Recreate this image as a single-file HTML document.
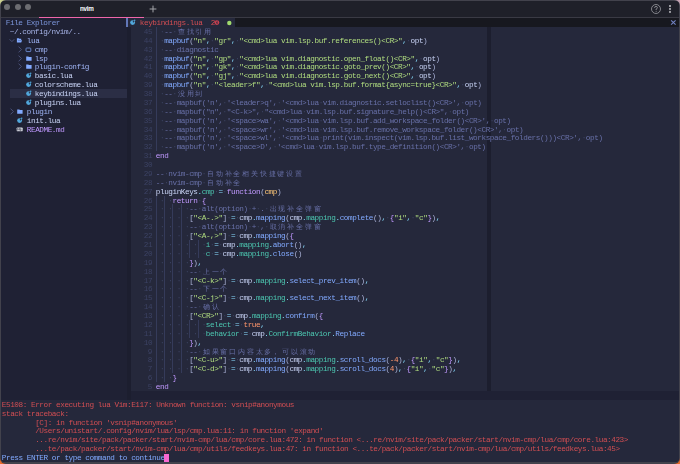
<!DOCTYPE html>
<html><head><meta charset="utf-8"><style>
html,body{margin:0;padding:0;width:680px;height:464px;overflow:hidden;background:#42424c}
body{position:relative;font-family:"Liberation Mono",monospace}
.corner{position:absolute;width:10px;height:10px}
#win{position:absolute;left:1.2px;top:1.2px;width:677.4px;height:461.2px;border-radius:4px;overflow:hidden;background:#1f2134}
.tl{position:absolute;top:3.9px;width:6.4px;height:6.4px;border-radius:50%;background:#6c6c71}
#grid{position:absolute;left:-1.2px;top:-1.2px;width:680px;height:464px}
.r{position:absolute;white-space:pre;will-change:transform;font-size:7.7px;line-height:8.88px;height:8.88px;letter-spacing:-0.4388px;transform:translate(-0.22px,1.3px)}
.w{display:inline-block;width:8.803px;text-align:center;font-style:normal;font-size:7.4px}
.wl{text-align:left}
.w{text-shadow:none}
.g{position:absolute;width:0.8px;height:8.88px;background:#353b5a}
.ic{position:absolute;overflow:visible}
</style></head><body>
<div class=corner style="left:0;top:0;background:radial-gradient(circle at 0 0,#d8dc9a 0,#a8ae78 35%,transparent 75%)"></div>
<div class=corner style="right:0;top:0;background:radial-gradient(circle at 100% 0,#d6b0c0 0,#9a8090 35%,transparent 75%)"></div>
<div class=corner style="left:0;bottom:0;background:radial-gradient(circle at 0 100%,#f07030 0,#d05a20 35%,transparent 75%)"></div>
<div class=corner style="right:0;bottom:0;background:radial-gradient(circle at 100% 100%,#f07030 0,#d05a20 35%,transparent 75%)"></div>
<div style="position:absolute;left:0;top:0;width:680px;height:464px;background:#42424c;border-radius:6px"></div>
<div id=win>
<div id=grid>
<div style="position:absolute;left:0;top:0;width:680px;height:17px;background:#1f2029"></div>
<div style="position:absolute;left:0;top:17px;width:680px;height:1px;background:#3a3a44"></div>
<div class=tl style="left:3.9px"></div><div class=tl style="left:14.5px"></div><div class=tl style="left:24.9px"></div>
<div style="position:absolute;left:79.5px;top:0;height:17px;white-space:pre;font-family:'Liberation Sans',sans-serif;font-size:7.6px;line-height:18px;color:#f0f0f4;text-shadow:0.3px 0 0 #f0f0f4;transform:scaleX(0.84);transform-origin:0 0">nvim</div>
<svg style="position:absolute;left:148.4px;top:3.8px" width="10" height="10" viewBox="0 0 10 10"><path d="M5 1.6 V8.4 M1.6 5 H8.4" stroke="#a4a4aa" stroke-width="1"/></svg>
<div style="position:absolute;left:39px;top:16.8px;width:105px;height:1.4px;background:#f066aa"></div>
<svg style="position:absolute;left:649.9px;top:2.8px" width="12" height="12" viewBox="0 0 12 12"><circle cx="6" cy="6" r="4.5" stroke="#9c9ca2" stroke-width="0.8" fill="none"/><path d="M4.6 4.9 Q4.6 3.4 6 3.4 Q7.4 3.4 7.4 4.7 Q7.4 5.6 6.1 6.1 V7" stroke="#9c9ca2" stroke-width="0.8" fill="none"/><circle cx="6.1" cy="8.3" r="0.5" fill="#9c9ca2"/></svg>
<div style="position:absolute;left:669.3px;top:5.2px;width:1.5px;height:1.4px;background:#9a9aa0;box-shadow:0 2.95px 0 #9a9aa0,0 5.9px 0 #9a9aa0"></div>
<div style="position:absolute;left:0;top:18.0px;width:680px;height:8.88px;background:#1f2134"></div>
<div style="position:absolute;left:131px;top:18.0px;width:548px;height:8.88px;background:#17181f"></div>
<div style="position:absolute;left:126.96px;top:18.0px;width:108.33px;height:8.88px;background:#25283b"></div>
<div style="position:absolute;left:131px;top:26.88px;width:548px;height:364.08px;background:#25283b"></div>
<div style="position:absolute;left:127px;top:26.88px;width:4px;height:372.96px;background:#1c1e2f"></div>
<div style="position:absolute;left:486.61px;top:26.88px;width:4.18px;height:364.08px;background:#1c1e2e"></div>
<div style="position:absolute;left:0;top:399.84px;width:680px;height:62.16px;background:#25283b"></div>
<div style="position:absolute;left:9.86px;top:89.04px;width:117.10px;height:8.88px;background:#2b2e45"></div>
<b class=g style="top:26.88px;left:155.73px"></b><b class=g style="top:35.76px;left:155.73px"></b><b class=g style="top:44.64px;left:155.73px"></b><b class=g style="top:53.52px;left:155.73px"></b><b class=g style="top:62.40px;left:155.73px"></b><b class=g style="top:71.28px;left:155.73px"></b><b class=g style="top:80.16px;left:155.73px"></b><b class=g style="top:89.04px;left:155.73px"></b><b class=g style="top:97.92px;left:155.73px"></b><b class=g style="top:106.80px;left:155.73px"></b><b class=g style="top:115.68px;left:155.73px"></b><b class=g style="top:124.56px;left:155.73px"></b><b class=g style="top:133.44px;left:155.73px"></b><b class=g style="top:142.32px;left:155.73px"></b><b class=g style="top:195.60px;left:155.73px"></b><b class=g style="top:195.60px;left:164.10px"></b><b class=g style="top:204.48px;left:155.73px"></b><b class=g style="top:204.48px;left:164.10px"></b><b class=g style="top:204.48px;left:172.46px"></b><b class=g style="top:204.48px;left:180.83px"></b><b class=g style="top:213.36px;left:155.73px"></b><b class=g style="top:213.36px;left:164.10px"></b><b class=g style="top:213.36px;left:172.46px"></b><b class=g style="top:213.36px;left:180.83px"></b><b class=g style="top:222.24px;left:155.73px"></b><b class=g style="top:222.24px;left:164.10px"></b><b class=g style="top:222.24px;left:172.46px"></b><b class=g style="top:222.24px;left:180.83px"></b><b class=g style="top:231.12px;left:155.73px"></b><b class=g style="top:231.12px;left:164.10px"></b><b class=g style="top:231.12px;left:172.46px"></b><b class=g style="top:231.12px;left:180.83px"></b><b class=g style="top:240.00px;left:155.73px"></b><b class=g style="top:240.00px;left:164.10px"></b><b class=g style="top:240.00px;left:172.46px"></b><b class=g style="top:240.00px;left:180.83px"></b><b class=g style="top:240.00px;left:189.19px"></b><b class=g style="top:240.00px;left:197.55px"></b><b class=g style="top:248.88px;left:155.73px"></b><b class=g style="top:248.88px;left:164.10px"></b><b class=g style="top:248.88px;left:172.46px"></b><b class=g style="top:248.88px;left:180.83px"></b><b class=g style="top:248.88px;left:189.19px"></b><b class=g style="top:248.88px;left:197.55px"></b><b class=g style="top:257.76px;left:155.73px"></b><b class=g style="top:257.76px;left:164.10px"></b><b class=g style="top:257.76px;left:172.46px"></b><b class=g style="top:257.76px;left:180.83px"></b><b class=g style="top:266.64px;left:155.73px"></b><b class=g style="top:266.64px;left:164.10px"></b><b class=g style="top:266.64px;left:172.46px"></b><b class=g style="top:266.64px;left:180.83px"></b><b class=g style="top:275.52px;left:155.73px"></b><b class=g style="top:275.52px;left:164.10px"></b><b class=g style="top:275.52px;left:172.46px"></b><b class=g style="top:275.52px;left:180.83px"></b><b class=g style="top:284.40px;left:155.73px"></b><b class=g style="top:284.40px;left:164.10px"></b><b class=g style="top:284.40px;left:172.46px"></b><b class=g style="top:284.40px;left:180.83px"></b><b class=g style="top:293.28px;left:155.73px"></b><b class=g style="top:293.28px;left:164.10px"></b><b class=g style="top:293.28px;left:172.46px"></b><b class=g style="top:293.28px;left:180.83px"></b><b class=g style="top:302.16px;left:155.73px"></b><b class=g style="top:302.16px;left:164.10px"></b><b class=g style="top:302.16px;left:172.46px"></b><b class=g style="top:302.16px;left:180.83px"></b><b class=g style="top:311.04px;left:155.73px"></b><b class=g style="top:311.04px;left:164.10px"></b><b class=g style="top:311.04px;left:172.46px"></b><b class=g style="top:311.04px;left:180.83px"></b><b class=g style="top:319.92px;left:155.73px"></b><b class=g style="top:319.92px;left:164.10px"></b><b class=g style="top:319.92px;left:172.46px"></b><b class=g style="top:319.92px;left:180.83px"></b><b class=g style="top:319.92px;left:189.19px"></b><b class=g style="top:319.92px;left:197.55px"></b><b class=g style="top:328.80px;left:155.73px"></b><b class=g style="top:328.80px;left:164.10px"></b><b class=g style="top:328.80px;left:172.46px"></b><b class=g style="top:328.80px;left:180.83px"></b><b class=g style="top:328.80px;left:189.19px"></b><b class=g style="top:328.80px;left:197.55px"></b><b class=g style="top:337.68px;left:155.73px"></b><b class=g style="top:337.68px;left:164.10px"></b><b class=g style="top:337.68px;left:172.46px"></b><b class=g style="top:337.68px;left:180.83px"></b><b class=g style="top:346.56px;left:155.73px"></b><b class=g style="top:346.56px;left:164.10px"></b><b class=g style="top:346.56px;left:172.46px"></b><b class=g style="top:346.56px;left:180.83px"></b><b class=g style="top:355.44px;left:155.73px"></b><b class=g style="top:355.44px;left:164.10px"></b><b class=g style="top:355.44px;left:172.46px"></b><b class=g style="top:355.44px;left:180.83px"></b><b class=g style="top:364.32px;left:155.73px"></b><b class=g style="top:364.32px;left:164.10px"></b><b class=g style="top:364.32px;left:172.46px"></b><b class=g style="top:364.32px;left:180.83px"></b><b class=g style="top:373.20px;left:155.73px"></b><b class=g style="top:373.20px;left:164.10px"></b>
<div class=r style="top:26.88px;left:143.69px"><span style="color:#3c4264">45</span></div>
<div class=r style="top:26.88px;left:156.23px"><span style="color:#3b4261"> ·</span><span style="color:#6870a8">--</span><span style="color:#3b4261">·</span><span style="color:#6870a8"><i class="w">查</i><i class="w">找</i><i class="w">引</i><i class="w">用</i></span></div>
<div class=r style="top:35.76px;left:143.69px"><span style="color:#3c4264">44</span></div>
<div class=r style="top:35.76px;left:156.23px"><span style="color:#3b4261"> ·</span><span style="color:#82aaff">mapbuf</span><span style="color:#a9b1d6">(</span><span style="color:#b2df80">"n"</span><span style="color:#89ddff">,</span><span style="color:#3b4261">·</span><span style="color:#b2df80">"gr"</span><span style="color:#89ddff">,</span><span style="color:#3b4261">·</span><span style="color:#b2df80">"&lt;cmd&gt;lua vim.lsp.buf.references()&lt;CR&gt;"</span><span style="color:#89ddff">,</span><span style="color:#3b4261">·</span><span style="color:#c8d3f5">opt</span><span style="color:#a9b1d6">)</span></div>
<div class=r style="top:44.64px;left:143.69px"><span style="color:#3c4264">43</span></div>
<div class=r style="top:44.64px;left:156.23px"><span style="color:#3b4261"> ·</span><span style="color:#6870a8">--</span><span style="color:#3b4261">·</span><span style="color:#6870a8">diagnostic</span></div>
<div class=r style="top:53.52px;left:143.69px"><span style="color:#3c4264">42</span></div>
<div class=r style="top:53.52px;left:156.23px"><span style="color:#3b4261"> ·</span><span style="color:#82aaff">mapbuf</span><span style="color:#a9b1d6">(</span><span style="color:#b2df80">"n"</span><span style="color:#89ddff">,</span><span style="color:#3b4261">·</span><span style="color:#b2df80">"gp"</span><span style="color:#89ddff">,</span><span style="color:#3b4261">·</span><span style="color:#b2df80">"&lt;cmd&gt;lua vim.diagnostic.open_float()&lt;CR&gt;"</span><span style="color:#89ddff">,</span><span style="color:#3b4261">·</span><span style="color:#c8d3f5">opt</span><span style="color:#a9b1d6">)</span></div>
<div class=r style="top:62.40px;left:143.69px"><span style="color:#3c4264">41</span></div>
<div class=r style="top:62.40px;left:156.23px"><span style="color:#3b4261"> ·</span><span style="color:#82aaff">mapbuf</span><span style="color:#a9b1d6">(</span><span style="color:#b2df80">"n"</span><span style="color:#89ddff">,</span><span style="color:#3b4261">·</span><span style="color:#b2df80">"gk"</span><span style="color:#89ddff">,</span><span style="color:#3b4261">·</span><span style="color:#b2df80">"&lt;cmd&gt;lua vim.diagnostic.goto_prev()&lt;CR&gt;"</span><span style="color:#89ddff">,</span><span style="color:#3b4261">·</span><span style="color:#c8d3f5">opt</span><span style="color:#a9b1d6">)</span></div>
<div class=r style="top:71.28px;left:143.69px"><span style="color:#3c4264">40</span></div>
<div class=r style="top:71.28px;left:156.23px"><span style="color:#3b4261"> ·</span><span style="color:#82aaff">mapbuf</span><span style="color:#a9b1d6">(</span><span style="color:#b2df80">"n"</span><span style="color:#89ddff">,</span><span style="color:#3b4261">·</span><span style="color:#b2df80">"gj"</span><span style="color:#89ddff">,</span><span style="color:#3b4261">·</span><span style="color:#b2df80">"&lt;cmd&gt;lua vim.diagnostic.goto_next()&lt;CR&gt;"</span><span style="color:#89ddff">,</span><span style="color:#3b4261">·</span><span style="color:#c8d3f5">opt</span><span style="color:#a9b1d6">)</span></div>
<div class=r style="top:80.16px;left:143.69px"><span style="color:#3c4264">39</span></div>
<div class=r style="top:80.16px;left:156.23px"><span style="color:#3b4261"> ·</span><span style="color:#82aaff">mapbuf</span><span style="color:#a9b1d6">(</span><span style="color:#b2df80">"n"</span><span style="color:#89ddff">,</span><span style="color:#3b4261">·</span><span style="color:#b2df80">"&lt;leader&gt;f"</span><span style="color:#89ddff">,</span><span style="color:#3b4261">·</span><span style="color:#b2df80">"&lt;cmd&gt;lua vim.lsp.buf.format{async=true}&lt;CR&gt;"</span><span style="color:#89ddff">,</span><span style="color:#3b4261">·</span><span style="color:#c8d3f5">opt</span><span style="color:#a9b1d6">)</span></div>
<div class=r style="top:89.04px;left:143.69px"><span style="color:#3c4264">38</span></div>
<div class=r style="top:89.04px;left:156.23px"><span style="color:#3b4261"> ·</span><span style="color:#6870a8">--</span><span style="color:#3b4261">·</span><span style="color:#6870a8"><i class="w">没</i><i class="w">用</i><i class="w">到</i></span></div>
<div class=r style="top:97.92px;left:143.69px"><span style="color:#3c4264">37</span></div>
<div class=r style="top:97.92px;left:156.23px"><span style="color:#3b4261"> ·</span><span style="color:#6870a8">--</span><span style="color:#3b4261">·</span><span style="color:#6870a8">mapbuf('n',</span><span style="color:#3b4261">·</span><span style="color:#6870a8">'&lt;leader&gt;q',</span><span style="color:#3b4261">·</span><span style="color:#6870a8">'&lt;cmd&gt;lua</span><span style="color:#3b4261">·</span><span style="color:#6870a8">vim.diagnostic.setloclist()&lt;CR&gt;',</span><span style="color:#3b4261">·</span><span style="color:#6870a8">opt)</span></div>
<div class=r style="top:106.80px;left:143.69px"><span style="color:#3c4264">36</span></div>
<div class=r style="top:106.80px;left:156.23px"><span style="color:#3b4261"> ·</span><span style="color:#6870a8">--</span><span style="color:#3b4261">·</span><span style="color:#6870a8">mapbuf("n",</span><span style="color:#3b4261">·</span><span style="color:#6870a8">"&lt;C-k&gt;",</span><span style="color:#3b4261">·</span><span style="color:#6870a8">"&lt;cmd&gt;lua</span><span style="color:#3b4261">·</span><span style="color:#6870a8">vim.lsp.buf.signature_help()&lt;CR&gt;",</span><span style="color:#3b4261">·</span><span style="color:#6870a8">opt)</span></div>
<div class=r style="top:115.68px;left:143.69px"><span style="color:#3c4264">35</span></div>
<div class=r style="top:115.68px;left:156.23px"><span style="color:#3b4261"> ·</span><span style="color:#6870a8">--</span><span style="color:#3b4261">·</span><span style="color:#6870a8">mapbuf('n',</span><span style="color:#3b4261">·</span><span style="color:#6870a8">'&lt;space&gt;wa',</span><span style="color:#3b4261">·</span><span style="color:#6870a8">'&lt;cmd&gt;lua</span><span style="color:#3b4261">·</span><span style="color:#6870a8">vim.lsp.buf.add_workspace_folder()&lt;CR&gt;',</span><span style="color:#3b4261">·</span><span style="color:#6870a8">opt)</span></div>
<div class=r style="top:124.56px;left:143.69px"><span style="color:#3c4264">34</span></div>
<div class=r style="top:124.56px;left:156.23px"><span style="color:#3b4261"> ·</span><span style="color:#6870a8">--</span><span style="color:#3b4261">·</span><span style="color:#6870a8">mapbuf('n',</span><span style="color:#3b4261">·</span><span style="color:#6870a8">'&lt;space&gt;wr',</span><span style="color:#3b4261">·</span><span style="color:#6870a8">'&lt;cmd&gt;lua</span><span style="color:#3b4261">·</span><span style="color:#6870a8">vim.lsp.buf.remove_workspace_folder()&lt;CR&gt;',</span><span style="color:#3b4261">·</span><span style="color:#6870a8">opt)</span></div>
<div class=r style="top:133.44px;left:143.69px"><span style="color:#3c4264">33</span></div>
<div class=r style="top:133.44px;left:156.23px"><span style="color:#3b4261"> ·</span><span style="color:#6870a8">--</span><span style="color:#3b4261">·</span><span style="color:#6870a8">mapbuf('n',</span><span style="color:#3b4261">·</span><span style="color:#6870a8">'&lt;space&gt;wl',</span><span style="color:#3b4261">·</span><span style="color:#6870a8">'&lt;cmd&gt;lua</span><span style="color:#3b4261">·</span><span style="color:#6870a8">print(vim.inspect(vim.lsp.buf.list_workspace_folders()))&lt;CR&gt;',</span><span style="color:#3b4261">·</span><span style="color:#6870a8">opt)</span></div>
<div class=r style="top:142.32px;left:143.69px"><span style="color:#3c4264">32</span></div>
<div class=r style="top:142.32px;left:156.23px"><span style="color:#3b4261"> ·</span><span style="color:#6870a8">--</span><span style="color:#3b4261">·</span><span style="color:#6870a8">mapbuf('n',</span><span style="color:#3b4261">·</span><span style="color:#6870a8">'&lt;space&gt;D',</span><span style="color:#3b4261">·</span><span style="color:#6870a8">'&lt;cmd&gt;lua</span><span style="color:#3b4261">·</span><span style="color:#6870a8">vim.lsp.buf.type_definition()&lt;CR&gt;',</span><span style="color:#3b4261">·</span><span style="color:#6870a8">opt)</span></div>
<div class=r style="top:151.20px;left:143.69px"><span style="color:#3c4264">31</span></div>
<div class=r style="top:151.20px;left:156.23px"><span style="color:#c099ff">end</span></div>
<div class=r style="top:160.08px;left:143.69px"><span style="color:#3c4264">30</span></div>
<div class=r style="top:168.96px;left:143.69px"><span style="color:#3c4264">29</span></div>
<div class=r style="top:168.96px;left:156.23px"><span style="color:#6870a8">--</span><span style="color:#3b4261">·</span><span style="color:#6870a8">nvim-cmp</span><span style="color:#3b4261">·</span><span style="color:#6870a8"><i class="w">自</i><i class="w">动</i><i class="w">补</i><i class="w">全</i><i class="w">相</i><i class="w">关</i><i class="w">快</i><i class="w">捷</i><i class="w">键</i><i class="w">设</i><i class="w">置</i></span></div>
<div class=r style="top:177.84px;left:143.69px"><span style="color:#3c4264">28</span></div>
<div class=r style="top:177.84px;left:156.23px"><span style="color:#6870a8">--</span><span style="color:#3b4261">·</span><span style="color:#6870a8">nvim-cmp</span><span style="color:#3b4261">·</span><span style="color:#6870a8"><i class="w">自</i><i class="w">动</i><i class="w">补</i><i class="w">全</i></span></div>
<div class=r style="top:186.72px;left:143.69px"><span style="color:#3c4264">27</span></div>
<div class=r style="top:186.72px;left:156.23px"><span style="color:#c8d3f5">pluginKeys</span><span style="color:#89ddff">.</span><span style="color:#4cc6b0">cmp</span><span style="color:#3b4261">·</span><span style="color:#89ddff">=</span><span style="color:#3b4261">·</span><span style="color:#c099ff">function</span><span style="color:#a9b1d6">(</span><span style="color:#ffc777">cmp</span><span style="color:#a9b1d6">)</span></div>
<div class=r style="top:195.60px;left:143.69px"><span style="color:#3c4264">26</span></div>
<div class=r style="top:195.60px;left:156.23px"><span style="color:#3b4261"> · ·</span><span style="color:#c099ff">return</span><span style="color:#3b4261">·</span><span style="color:#c099ff">{</span></div>
<div class=r style="top:204.48px;left:143.69px"><span style="color:#3c4264">25</span></div>
<div class=r style="top:204.48px;left:156.23px"><span style="color:#3b4261"> · · · ·</span><span style="color:#6870a8">--</span><span style="color:#3b4261">·</span><span style="color:#6870a8">alt(option)</span><span style="color:#3b4261">·</span><span style="color:#6870a8">+</span><span style="color:#3b4261">·</span><span style="color:#6870a8">.</span><span style="color:#3b4261">·</span><span style="color:#6870a8"><i class="w">出</i><i class="w">现</i><i class="w">补</i><i class="w">全</i><i class="w">弹</i><i class="w">窗</i></span></div>
<div class=r style="top:213.36px;left:143.69px"><span style="color:#3c4264">24</span></div>
<div class=r style="top:213.36px;left:156.23px"><span style="color:#3b4261"> · · · ·</span><span style="color:#a9b1d6">[</span><span style="color:#b2df80">"&lt;A-.&gt;"</span><span style="color:#a9b1d6">]</span><span style="color:#3b4261">·</span><span style="color:#89ddff">=</span><span style="color:#3b4261">·</span><span style="color:#c8d3f5">cmp</span><span style="color:#89ddff">.</span><span style="color:#82aaff">mapping</span><span style="color:#a9b1d6">(</span><span style="color:#c8d3f5">cmp</span><span style="color:#89ddff">.</span><span style="color:#4cc6b0">mapping</span><span style="color:#89ddff">.</span><span style="color:#82aaff">complete</span><span style="color:#a9b1d6">()</span><span style="color:#89ddff">,</span><span style="color:#3b4261">·</span><span style="color:#c099ff">{</span><span style="color:#b2df80">"i"</span><span style="color:#89ddff">,</span><span style="color:#3b4261">·</span><span style="color:#b2df80">"c"</span><span style="color:#c099ff">}</span><span style="color:#a9b1d6">)</span><span style="color:#89ddff">,</span></div>
<div class=r style="top:222.24px;left:143.69px"><span style="color:#3c4264">23</span></div>
<div class=r style="top:222.24px;left:156.23px"><span style="color:#3b4261"> · · · ·</span><span style="color:#6870a8">--</span><span style="color:#3b4261">·</span><span style="color:#6870a8">alt(option)</span><span style="color:#3b4261">·</span><span style="color:#6870a8">+</span><span style="color:#3b4261">·</span><span style="color:#6870a8">,</span><span style="color:#3b4261">·</span><span style="color:#6870a8"><i class="w">取</i><i class="w">消</i><i class="w">补</i><i class="w">全</i><i class="w">弹</i><i class="w">窗</i></span></div>
<div class=r style="top:231.12px;left:143.69px"><span style="color:#3c4264">22</span></div>
<div class=r style="top:231.12px;left:156.23px"><span style="color:#3b4261"> · · · ·</span><span style="color:#a9b1d6">[</span><span style="color:#b2df80">"&lt;A-,&gt;"</span><span style="color:#a9b1d6">]</span><span style="color:#3b4261">·</span><span style="color:#89ddff">=</span><span style="color:#3b4261">·</span><span style="color:#c8d3f5">cmp</span><span style="color:#89ddff">.</span><span style="color:#82aaff">mapping</span><span style="color:#a9b1d6">(</span><span style="color:#c099ff">{</span></div>
<div class=r style="top:240.00px;left:143.69px"><span style="color:#3c4264">21</span></div>
<div class=r style="top:240.00px;left:156.23px"><span style="color:#3b4261"> · · · · · ·</span><span style="color:#4cc6b0">i</span><span style="color:#3b4261">·</span><span style="color:#89ddff">=</span><span style="color:#3b4261">·</span><span style="color:#c8d3f5">cmp</span><span style="color:#89ddff">.</span><span style="color:#4cc6b0">mapping</span><span style="color:#89ddff">.</span><span style="color:#82aaff">abort</span><span style="color:#a9b1d6">()</span><span style="color:#89ddff">,</span></div>
<div class=r style="top:248.88px;left:143.69px"><span style="color:#3c4264">20</span></div>
<div class=r style="top:248.88px;left:156.23px"><span style="color:#3b4261"> · · · · · ·</span><span style="color:#4cc6b0">c</span><span style="color:#3b4261">·</span><span style="color:#89ddff">=</span><span style="color:#3b4261">·</span><span style="color:#c8d3f5">cmp</span><span style="color:#89ddff">.</span><span style="color:#4cc6b0">mapping</span><span style="color:#89ddff">.</span><span style="color:#82aaff">close</span><span style="color:#a9b1d6">()</span></div>
<div class=r style="top:257.76px;left:143.69px"><span style="color:#3c4264">19</span></div>
<div class=r style="top:257.76px;left:156.23px"><span style="color:#3b4261"> · · · ·</span><span style="color:#c099ff">}</span><span style="color:#a9b1d6">)</span><span style="color:#89ddff">,</span></div>
<div class=r style="top:266.64px;left:143.69px"><span style="color:#3c4264">18</span></div>
<div class=r style="top:266.64px;left:156.23px"><span style="color:#3b4261"> · · · ·</span><span style="color:#6870a8">--</span><span style="color:#3b4261">·</span><span style="color:#6870a8"><i class="w">上</i><i class="w">一</i><i class="w">个</i></span></div>
<div class=r style="top:275.52px;left:143.69px"><span style="color:#3c4264">17</span></div>
<div class=r style="top:275.52px;left:156.23px"><span style="color:#3b4261"> · · · ·</span><span style="color:#a9b1d6">[</span><span style="color:#b2df80">"&lt;C-k&gt;"</span><span style="color:#a9b1d6">]</span><span style="color:#3b4261">·</span><span style="color:#89ddff">=</span><span style="color:#3b4261">·</span><span style="color:#c8d3f5">cmp</span><span style="color:#89ddff">.</span><span style="color:#4cc6b0">mapping</span><span style="color:#89ddff">.</span><span style="color:#82aaff">select_prev_item</span><span style="color:#a9b1d6">()</span><span style="color:#89ddff">,</span></div>
<div class=r style="top:284.40px;left:143.69px"><span style="color:#3c4264">16</span></div>
<div class=r style="top:284.40px;left:156.23px"><span style="color:#3b4261"> · · · ·</span><span style="color:#6870a8">--</span><span style="color:#3b4261">·</span><span style="color:#6870a8"><i class="w">下</i><i class="w">一</i><i class="w">个</i></span></div>
<div class=r style="top:293.28px;left:143.69px"><span style="color:#3c4264">15</span></div>
<div class=r style="top:293.28px;left:156.23px"><span style="color:#3b4261"> · · · ·</span><span style="color:#a9b1d6">[</span><span style="color:#b2df80">"&lt;C-j&gt;"</span><span style="color:#a9b1d6">]</span><span style="color:#3b4261">·</span><span style="color:#89ddff">=</span><span style="color:#3b4261">·</span><span style="color:#c8d3f5">cmp</span><span style="color:#89ddff">.</span><span style="color:#4cc6b0">mapping</span><span style="color:#89ddff">.</span><span style="color:#82aaff">select_next_item</span><span style="color:#a9b1d6">()</span><span style="color:#89ddff">,</span></div>
<div class=r style="top:302.16px;left:143.69px"><span style="color:#3c4264">14</span></div>
<div class=r style="top:302.16px;left:156.23px"><span style="color:#3b4261"> · · · ·</span><span style="color:#6870a8">--</span><span style="color:#3b4261">·</span><span style="color:#6870a8"><i class="w">确</i><i class="w">认</i></span></div>
<div class=r style="top:311.04px;left:143.69px"><span style="color:#3c4264">13</span></div>
<div class=r style="top:311.04px;left:156.23px"><span style="color:#3b4261"> · · · ·</span><span style="color:#a9b1d6">[</span><span style="color:#b2df80">"&lt;CR&gt;"</span><span style="color:#a9b1d6">]</span><span style="color:#3b4261">·</span><span style="color:#89ddff">=</span><span style="color:#3b4261">·</span><span style="color:#c8d3f5">cmp</span><span style="color:#89ddff">.</span><span style="color:#4cc6b0">mapping</span><span style="color:#89ddff">.</span><span style="color:#82aaff">confirm</span><span style="color:#a9b1d6">(</span><span style="color:#c099ff">{</span></div>
<div class=r style="top:319.92px;left:143.69px"><span style="color:#3c4264">12</span></div>
<div class=r style="top:319.92px;left:156.23px"><span style="color:#3b4261"> · · · · · ·</span><span style="color:#4cc6b0">select</span><span style="color:#3b4261">·</span><span style="color:#89ddff">=</span><span style="color:#3b4261">·</span><span style="color:#ff966c">true</span><span style="color:#89ddff">,</span></div>
<div class=r style="top:328.80px;left:143.69px"><span style="color:#3c4264">11</span></div>
<div class=r style="top:328.80px;left:156.23px"><span style="color:#3b4261"> · · · · · ·</span><span style="color:#4cc6b0">behavior</span><span style="color:#3b4261">·</span><span style="color:#89ddff">=</span><span style="color:#3b4261">·</span><span style="color:#c8d3f5">cmp</span><span style="color:#89ddff">.</span><span style="color:#4cc6b0">ConfirmBehavior</span><span style="color:#89ddff">.</span><span style="color:#82aaff">Replace</span></div>
<div class=r style="top:337.68px;left:143.69px"><span style="color:#3c4264">10</span></div>
<div class=r style="top:337.68px;left:156.23px"><span style="color:#3b4261"> · · · ·</span><span style="color:#c099ff">}</span><span style="color:#a9b1d6">)</span><span style="color:#89ddff">,</span></div>
<div class=r style="top:346.56px;left:147.87px"><span style="color:#3c4264">9</span></div>
<div class=r style="top:346.56px;left:156.23px"><span style="color:#3b4261"> · · · ·</span><span style="color:#6870a8">--</span><span style="color:#3b4261">·</span><span style="color:#6870a8"><i class="w">如</i><i class="w">果</i><i class="w">窗</i><i class="w">口</i><i class="w">内</i><i class="w">容</i><i class="w">太</i><i class="w">多</i><i class="w wl">，</i><i class="w">可</i><i class="w">以</i><i class="w">滚</i><i class="w">动</i></span></div>
<div class=r style="top:355.44px;left:147.87px"><span style="color:#3c4264">8</span></div>
<div class=r style="top:355.44px;left:156.23px"><span style="color:#3b4261"> · · · ·</span><span style="color:#a9b1d6">[</span><span style="color:#b2df80">"&lt;C-u&gt;"</span><span style="color:#a9b1d6">]</span><span style="color:#3b4261">·</span><span style="color:#89ddff">=</span><span style="color:#3b4261">·</span><span style="color:#c8d3f5">cmp</span><span style="color:#89ddff">.</span><span style="color:#82aaff">mapping</span><span style="color:#a9b1d6">(</span><span style="color:#c8d3f5">cmp</span><span style="color:#89ddff">.</span><span style="color:#4cc6b0">mapping</span><span style="color:#89ddff">.</span><span style="color:#82aaff">scroll_docs</span><span style="color:#a9b1d6">(</span><span style="color:#ff966c">-4</span><span style="color:#a9b1d6">)</span><span style="color:#89ddff">,</span><span style="color:#3b4261">·</span><span style="color:#c099ff">{</span><span style="color:#b2df80">"i"</span><span style="color:#89ddff">,</span><span style="color:#3b4261">·</span><span style="color:#b2df80">"c"</span><span style="color:#c099ff">}</span><span style="color:#a9b1d6">)</span><span style="color:#89ddff">,</span></div>
<div class=r style="top:364.32px;left:147.87px"><span style="color:#3c4264">7</span></div>
<div class=r style="top:364.32px;left:156.23px"><span style="color:#3b4261"> · · · ·</span><span style="color:#a9b1d6">[</span><span style="color:#b2df80">"&lt;C-d&gt;"</span><span style="color:#a9b1d6">]</span><span style="color:#3b4261">·</span><span style="color:#89ddff">=</span><span style="color:#3b4261">·</span><span style="color:#c8d3f5">cmp</span><span style="color:#89ddff">.</span><span style="color:#82aaff">mapping</span><span style="color:#a9b1d6">(</span><span style="color:#c8d3f5">cmp</span><span style="color:#89ddff">.</span><span style="color:#4cc6b0">mapping</span><span style="color:#89ddff">.</span><span style="color:#82aaff">scroll_docs</span><span style="color:#a9b1d6">(</span><span style="color:#ff966c">4</span><span style="color:#a9b1d6">)</span><span style="color:#89ddff">,</span><span style="color:#3b4261">·</span><span style="color:#c099ff">{</span><span style="color:#b2df80">"i"</span><span style="color:#89ddff">,</span><span style="color:#3b4261">·</span><span style="color:#b2df80">"c"</span><span style="color:#c099ff">}</span><span style="color:#a9b1d6">)</span><span style="color:#89ddff">,</span></div>
<div class=r style="top:373.20px;left:147.87px"><span style="color:#3c4264">6</span></div>
<div class=r style="top:373.20px;left:156.23px"><span style="color:#3b4261"> · ·</span><span style="color:#c099ff">}</span></div>
<div class=r style="top:382.08px;left:147.87px"><span style="color:#3c4264">5</span></div>
<div class=r style="top:382.08px;left:156.23px"><span style="color:#c099ff">end</span></div>

<div class=r style="top:18.00px;left:5.68px"><span style="color:#7c96dc">File Explorer</span></div>
<div class=r style="top:26.88px;left:9.86px"><span style="color:#a6b3e6">~/.config/nvim/..</span></div>
<div class=r style="top:35.76px;left:26.59px"><span style="color:#9db2f2">lua</span></div>
<div class=r style="top:44.64px;left:34.96px"><span style="color:#9db2f2">cmp</span></div>
<div class=r style="top:53.52px;left:34.96px"><span style="color:#9db2f2">lsp</span></div>
<div class=r style="top:62.40px;left:34.96px"><span style="color:#9db2f2">plugin-config</span></div>
<div class=r style="top:71.28px;left:34.96px"><span style="color:#c8d3f5">basic.lua</span></div>
<div class=r style="top:80.16px;left:34.96px"><span style="color:#c8d3f5">colorscheme.lua</span></div>
<div class=r style="top:89.04px;left:34.96px"><span style="color:#c8d3f5">keybindings.lua</span></div>
<div class=r style="top:97.92px;left:34.96px"><span style="color:#c8d3f5">plugins.lua</span></div>
<div class=r style="top:106.80px;left:26.59px"><span style="color:#9db2f2">plugin</span></div>
<div class=r style="top:115.68px;left:26.59px"><span style="color:#c8d3f5">init.lua</span></div>
<div class=r style="top:124.56px;left:26.59px"><span style="color:#c099ff">README.md</span></div>
<svg class=ic style="left:7.86px;top:35.76px" width="12" height="9" viewBox="-2.0 0 12 9"><path d="M-0.4 3.3 L1.9 5.6 L4.2 3.3" stroke="#4a5178" stroke-width="1.0" fill="none"/></svg><svg class=ic style="left:16.23px;top:35.76px" width="12" height="9" viewBox="-2.0 0 12 9"><path d="M-1.1 2.2 h1.9 l0.6 0.6 h1.8 v1.1 h-3.2 l-1.1 2.6 z M-0.2 4.3 h4.3 l-0.9 2.3 h-4.3 z" fill="#82aaff"/></svg><svg class=ic style="left:16.23px;top:44.64px" width="12" height="9" viewBox="-2.0 0 12 9"><path d="M0.5 1.6 L3.4 4.5 L0.5 7.4" stroke="#4a5178" stroke-width="1.0" fill="none"/></svg><svg class=ic style="left:24.59px;top:44.64px" width="12" height="9" viewBox="-2.0 0 12 9"><rect x="-1.0" y="3.0" width="4.8" height="3.6" rx="0.7" stroke="#82aaff" stroke-width="0.7" fill="none"/></svg><svg class=ic style="left:16.23px;top:53.52px" width="12" height="9" viewBox="-2.0 0 12 9"><path d="M0.5 1.6 L3.4 4.5 L0.5 7.4" stroke="#4a5178" stroke-width="1.0" fill="none"/></svg><svg class=ic style="left:24.59px;top:53.52px" width="12" height="9" viewBox="-2.0 0 12 9"><path d="M-0.8 2.5 h2.1 l0.6 0.6 h2.7 v3.6 h-5.4 z" fill="#82aaff"/></svg><svg class=ic style="left:16.23px;top:62.40px" width="12" height="9" viewBox="-2.0 0 12 9"><path d="M0.5 1.6 L3.4 4.5 L0.5 7.4" stroke="#4a5178" stroke-width="1.0" fill="none"/></svg><svg class=ic style="left:24.59px;top:62.40px" width="12" height="9" viewBox="-2.0 0 12 9"><path d="M-0.8 2.5 h2.1 l0.6 0.6 h2.7 v3.6 h-5.4 z" fill="#82aaff"/></svg><svg class=ic style="left:24.59px;top:71.28px" width="12" height="9" viewBox="-2.0 0 12 9"><circle cx="1.6" cy="4.6" r="2.45" fill="#51a8dd"/><circle cx="2.45" cy="3.7" r="0.7" fill="#1f2134"/><circle cx="3.7" cy="2.3" r="0.75" fill="#51a8dd"/></svg><svg class=ic style="left:24.59px;top:80.16px" width="12" height="9" viewBox="-2.0 0 12 9"><circle cx="1.6" cy="4.6" r="2.45" fill="#51a8dd"/><circle cx="2.45" cy="3.7" r="0.7" fill="#1f2134"/><circle cx="3.7" cy="2.3" r="0.75" fill="#51a8dd"/></svg><svg class=ic style="left:24.59px;top:89.04px" width="12" height="9" viewBox="-2.0 0 12 9"><circle cx="1.6" cy="4.6" r="2.45" fill="#51a8dd"/><circle cx="2.45" cy="3.7" r="0.7" fill="#2b2e45"/><circle cx="3.7" cy="2.3" r="0.75" fill="#51a8dd"/></svg><svg class=ic style="left:24.59px;top:97.92px" width="12" height="9" viewBox="-2.0 0 12 9"><circle cx="1.6" cy="4.6" r="2.45" fill="#51a8dd"/><circle cx="2.45" cy="3.7" r="0.7" fill="#1f2134"/><circle cx="3.7" cy="2.3" r="0.75" fill="#51a8dd"/></svg><svg class=ic style="left:7.86px;top:106.80px" width="12" height="9" viewBox="-2.0 0 12 9"><path d="M0.5 1.6 L3.4 4.5 L0.5 7.4" stroke="#4a5178" stroke-width="1.0" fill="none"/></svg><svg class=ic style="left:16.23px;top:106.80px" width="12" height="9" viewBox="-2.0 0 12 9"><path d="M-0.8 2.5 h2.1 l0.6 0.6 h2.7 v3.6 h-5.4 z" fill="#82aaff"/></svg><svg class=ic style="left:16.23px;top:115.68px" width="12" height="9" viewBox="-2.0 0 12 9"><circle cx="1.6" cy="4.6" r="2.45" fill="#51a8dd"/><circle cx="2.45" cy="3.7" r="0.7" fill="#1f2134"/><circle cx="3.7" cy="2.3" r="0.75" fill="#51a8dd"/></svg><svg class=ic style="left:16.23px;top:124.56px" width="12" height="9" viewBox="-2.0 0 12 9"><rect x="-1.3" y="2.4" width="6" height="3.9" rx="0.9" fill="#d0d3dc"/><path d="M-0.4 5.4 v-2.0 l0.9 1.0 l0.9 -1.0 v2.0 M2.6 3.3 v2.0 M1.9 4.6 l0.7 0.8 l0.7 -0.8" stroke="#1e2030" stroke-width="0.5" fill="none"/></svg>
<div class=r style="top:18.00px;left:139.51px"><span style="color:#d24e53">keybindings.lua</span></div>
<div class=r style="top:18.00px;left:210.60px"><span style="color:#d24e53">2</span></div>
<b style="position:absolute;left:125.9px;top:18.1px;width:1.9px;height:8.8px;background:#6277b8"></b><svg class=ic style="left:129.14px;top:18.00px" width="12" height="9" viewBox="-2.0 0 12 9"><circle cx="1.6" cy="4.6" r="2.45" fill="#51a8dd"/><circle cx="2.45" cy="3.7" r="0.7" fill="#25283b"/><circle cx="3.7" cy="2.3" r="0.75" fill="#51a8dd"/></svg><svg class=ic style="left:212.78px;top:18.00px" width="12" height="9" viewBox="-2.0 0 12 9"><circle cx="1.9" cy="4.6" r="2.4" fill="#cc4050"/><path d="M0.8 3.5 L3.0 5.7 M3.0 3.5 L0.8 5.7" stroke="#25283b" stroke-width="0.7"/></svg><svg class=ic style="left:225.33px;top:18.00px" width="12" height="9" viewBox="-2.0 0 12 9"><circle cx="2.3" cy="5.06" r="2.2" fill="#a0da6e"/></svg><svg class=ic style="left:669.5px;top:18.00px" width="8" height="9" viewBox="0 0 8 9"><path d="M1.1 2.4 L5.6 6.7 M5.6 2.4 L1.1 6.7" stroke="#7282c4" stroke-width="1.1"/></svg>
<div class=r style="top:399.84px;left:1.50px"><span style="color:#d24e53">E5108: Error executing lua Vim:E117: Unknown function: vsnip#anonymous</span></div>
<div class=r style="top:408.72px;left:1.50px"><span style="color:#d24e53">stack traceback:</span></div>
<div class=r style="top:417.60px;left:1.50px"><span style="color:#d24e53">        [C]: in function 'vsnip#anonymous'</span></div>
<div class=r style="top:426.48px;left:1.50px"><span style="color:#d24e53">        /Users/unistart/.config/nvim/lua/lsp/cmp.lua:11: in function 'expand'</span></div>
<div class=r style="top:435.36px;left:1.50px"><span style="color:#d24e53">        ...re/nvim/site/pack/packer/start/nvim-cmp/lua/cmp/core.lua:472: in function &lt;...re/nvim/site/pack/packer/start/nvim-cmp/lua/cmp/core.lua:423&gt;</span></div>
<div class=r style="top:444.24px;left:1.50px"><span style="color:#d24e53">        ...te/pack/packer/start/nvim-cmp/lua/cmp/utils/feedkeys.lua:47: in function &lt;...te/pack/packer/start/nvim-cmp/lua/cmp/utils/feedkeys.lua:45&gt;</span></div>
<div class=r style="top:453.12px;left:1.50px"><span style="color:#82aaff">Press ENTER or type command to continue</span></div>
<b style="position:absolute;left:164.1px;top:454.1px;width:4.7px;height:7.7px;background:#f868d2"></b>
</div>
</div>
</body></html>
